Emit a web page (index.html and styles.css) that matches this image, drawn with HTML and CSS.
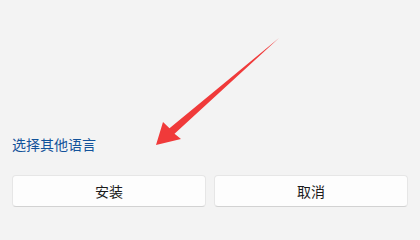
FILE: index.html
```html
<!DOCTYPE html>
<html lang="zh">
<head>
<meta charset="utf-8">
<link rel="stylesheet" href="styles.css">
</head>
<body>
<div class="page">
  <a class="link" href="#">选择其他语言</a>
  <div class="actions">
    <button class="btn">安装</button>
    <button class="btn">取消</button>
  </div>
  <svg class="arrow" width="420" height="225" viewBox="0 0 420 225">
    <polygon fill="#f03a3a" points="156,145 163,122 169.5,128.3 279,38 174.5,133.8 181,139"/>
  </svg>
</div>
</body>
</html>
```

FILE: styles.css
```css
html, body {
  margin: 0;
  padding: 0;
  background: #f3f3f3;
}
.page {
  position: relative;
  width: 420px;
  height: 225px;
  box-sizing: border-box;
  padding: 134px 12px 0;
  display: flex;
  flex-direction: column;
  font-family: "Noto Sans CJK SC", "Noto Sans", sans-serif;
}
.link {
  display: block;
  font-size: 14px;
  line-height: 20px;
  height: 20px;
  color: #12529a;
  text-decoration: none;
  align-self: flex-start;
}
.actions {
  display: flex;
  gap: 8px;
  margin-top: 21px;
}
.btn {
  flex: 1;
  height: 32px;
  box-sizing: border-box;
  background: #fdfdfd;
  border: 1px solid #e6e6e6;
  border-bottom-color: #d2d2d2;
  border-radius: 4px;
  font-family: "Noto Sans CJK SC", "Noto Sans", sans-serif;
  font-size: 14px;
  color: #1b1b1b;
  padding: 0;
}
.arrow {
  position: absolute;
  left: 0;
  top: 0;
  pointer-events: none;
}
```
